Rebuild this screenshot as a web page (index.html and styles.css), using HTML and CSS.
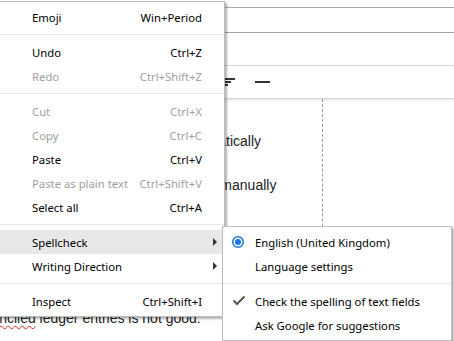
FILE: index.html
```html
<!DOCTYPE html>
<html lang="en">
<head>
  <meta charset="UTF-8">
  <meta name="viewport" content="width=device-width, initial-scale=1.0">
  <title>Ledger - context menu</title>
  <link rel="stylesheet" href="styles.css">
</head>
<body>

  <div class="page">
    <div class="topbar"></div>
    <div class="titlebar"></div>
    <div class="tabbar"></div>
    <div class="toolbar">
      <span class="tool">
        <svg width="24" height="24" viewBox="0 0 24 24">
          <rect x="3" y="8" width="18" height="2" fill="#333"/>
          <rect x="7" y="11" width="10" height="2" fill="#333"/>
          <rect x="10" y="14" width="4" height="2" fill="#333"/>
        </svg>
      </span>
      <span class="tool">
        <svg width="24" height="24" viewBox="0 0 24 24">
          <rect x="5" y="11" width="15" height="2" fill="#333"/>
        </svg>
      </span>
    </div>
    <div class="content">
      <div class="main-col">
        <p class="option option-auto">Reconcile automatically</p>
        <p class="option option-manual">Reconcile manually</p>
        <p class="note"><span class="misspelled">Unreconciled</span> ledger entries is not good.</p>
      </div>
      <div class="side-col"></div>
    </div>
  </div>

  <!-- context menu -->
  <div class="menu">
    <div class="item"><span>Emoji</span><span class="key">Win+Period</span></div>
    <div class="sep"></div>
    <div class="item"><span>Undo</span><span class="key">Ctrl+Z</span></div>
    <div class="item disabled"><span>Redo</span><span class="key">Ctrl+Shift+Z</span></div>
    <div class="sep"></div>
    <div class="item disabled"><span>Cut</span><span class="key">Ctrl+X</span></div>
    <div class="item disabled"><span>Copy</span><span class="key">Ctrl+C</span></div>
    <div class="item"><span>Paste</span><span class="key">Ctrl+V</span></div>
    <div class="item disabled"><span>Paste as plain text</span><span class="key">Ctrl+Shift+V</span></div>
    <div class="item"><span>Select all</span><span class="key">Ctrl+A</span></div>
    <div class="sep"></div>
    <div class="item has-sub active"><span>Spellcheck</span><span class="arrow"></span></div>
    <div class="item has-sub"><span>Writing Direction</span><span class="arrow"></span></div>
    <div class="sep"></div>
    <div class="item"><span>Inspect</span><span class="key">Ctrl+Shift+I</span></div>
  </div>

  <div class="submenu">
    <div class="sub-item">
      <span class="mark">
        <svg width="16" height="16" viewBox="0 0 16 16">
          <circle cx="7" cy="8" r="5.3" fill="none" stroke="#1a73e8" stroke-width="1.5"/>
          <circle cx="7" cy="8" r="3" fill="#1a73e8"/>
        </svg>
      </span>
      <span>English (United Kingdom)</span>
    </div>
    <div class="sub-item"><span class="mark"></span><span>Language settings</span></div>
    <div class="sep"></div>
    <div class="sub-item">
      <span class="mark">
        <svg width="16" height="16" viewBox="0 0 16 16">
          <polyline points="2.5,7.5 6,11 13.5,3.5" fill="none" stroke="#555" stroke-width="2"/>
        </svg>
      </span>
      <span>Check the spelling of text fields</span>
    </div>
    <div class="sub-item"><span class="mark"></span><span>Ask Google for suggestions</span></div>
  </div>

</body>
</html>
```

FILE: styles.css
```css
* {
  margin: 0;
  padding: 0;
  box-sizing: border-box;
}

body {
  background-color: #fff;
  font-family: "Liberation Sans", Arial, sans-serif;
  font-size: 14px;
  color: #222;
  overflow: hidden;
}

/* page behind the menu */
.page {
  min-height: 100vh;
  display: flex;
  flex-direction: column;
}

.topbar {
  height: 8px;
  border-bottom: 1px solid #aaa;
}

.titlebar {
  height: 25px;
  border-bottom: 1px solid #a6a6a6;
}

.tabbar {
  height: 33px;
  border-bottom: 1px solid #ddd;
}

.toolbar {
  height: 33px;
  display: flex;
  align-items: center;
  gap: 12px;
  padding-left: 214px;
  border-bottom: 1px solid #d6d6d6;
  box-shadow: 0 1px 3px rgba(0, 0, 0, 0.12);
}

.tool {
  display: flex;
  width: 24px;
  height: 24px;
}

.content {
  flex: 1;
  display: flex;
}

.main-col {
  width: 323px;
  padding-top: 32px;
  border-right: 1px dashed #999;
}

.side-col {
  flex: 1;
}

.option {
  line-height: 20px;
  margin-bottom: 24px;
  white-space: nowrap;
}

.option-auto {
  padding-left: 114px;
}

.option-manual {
  padding-left: 155px;
}

.note {
  line-height: 20px;
  margin-top: 113px;
  margin-left: -46px;
  white-space: nowrap;
}

.misspelled {
  text-decoration: underline wavy #e0201c;
  text-decoration-thickness: 1px;
  text-underline-offset: 2px;
}

/* context menu */
.menu, .submenu {
  position: absolute;
  background-color: #fff;
  border: 1px solid #bcbcbc;
  padding: 3px 0;
  box-shadow: 2px 2px 2px rgba(0, 0, 0, 0.3);
  font-family: "Noto Sans", "Open Sans", sans-serif;
  font-size: 11.3px;
  color: #000;
}

.menu {
  left: -1px;
  top: 1px;
  width: 226px;
}

.submenu {
  left: 222px;
  top: 226px;
  width: 230px;
}

.item {
  display: flex;
  align-items: center;
  height: 24px;
  padding: 0 22px 0 32px;
  white-space: nowrap;
}

.item .key {
  margin-left: auto;
}

.item.disabled {
  color: #a0a0a0;
}

.item.active {
  background-color: #e8e8e8;
}

.item.has-sub {
  padding-right: 7px;
}

.arrow {
  margin-left: auto;
  width: 0;
  height: 0;
  border-left: 4px solid #333;
  border-top: 4px solid transparent;
  border-bottom: 4px solid transparent;
}

.sep {
  height: 1px;
  margin: 5px 0;
  background-color: #e6e6e6;
}

.sub-item {
  display: flex;
  align-items: center;
  gap: 8px;
  height: 24px;
  padding-left: 8px;
  white-space: nowrap;
}

.mark {
  display: flex;
  width: 16px;
  height: 16px;
}
```
